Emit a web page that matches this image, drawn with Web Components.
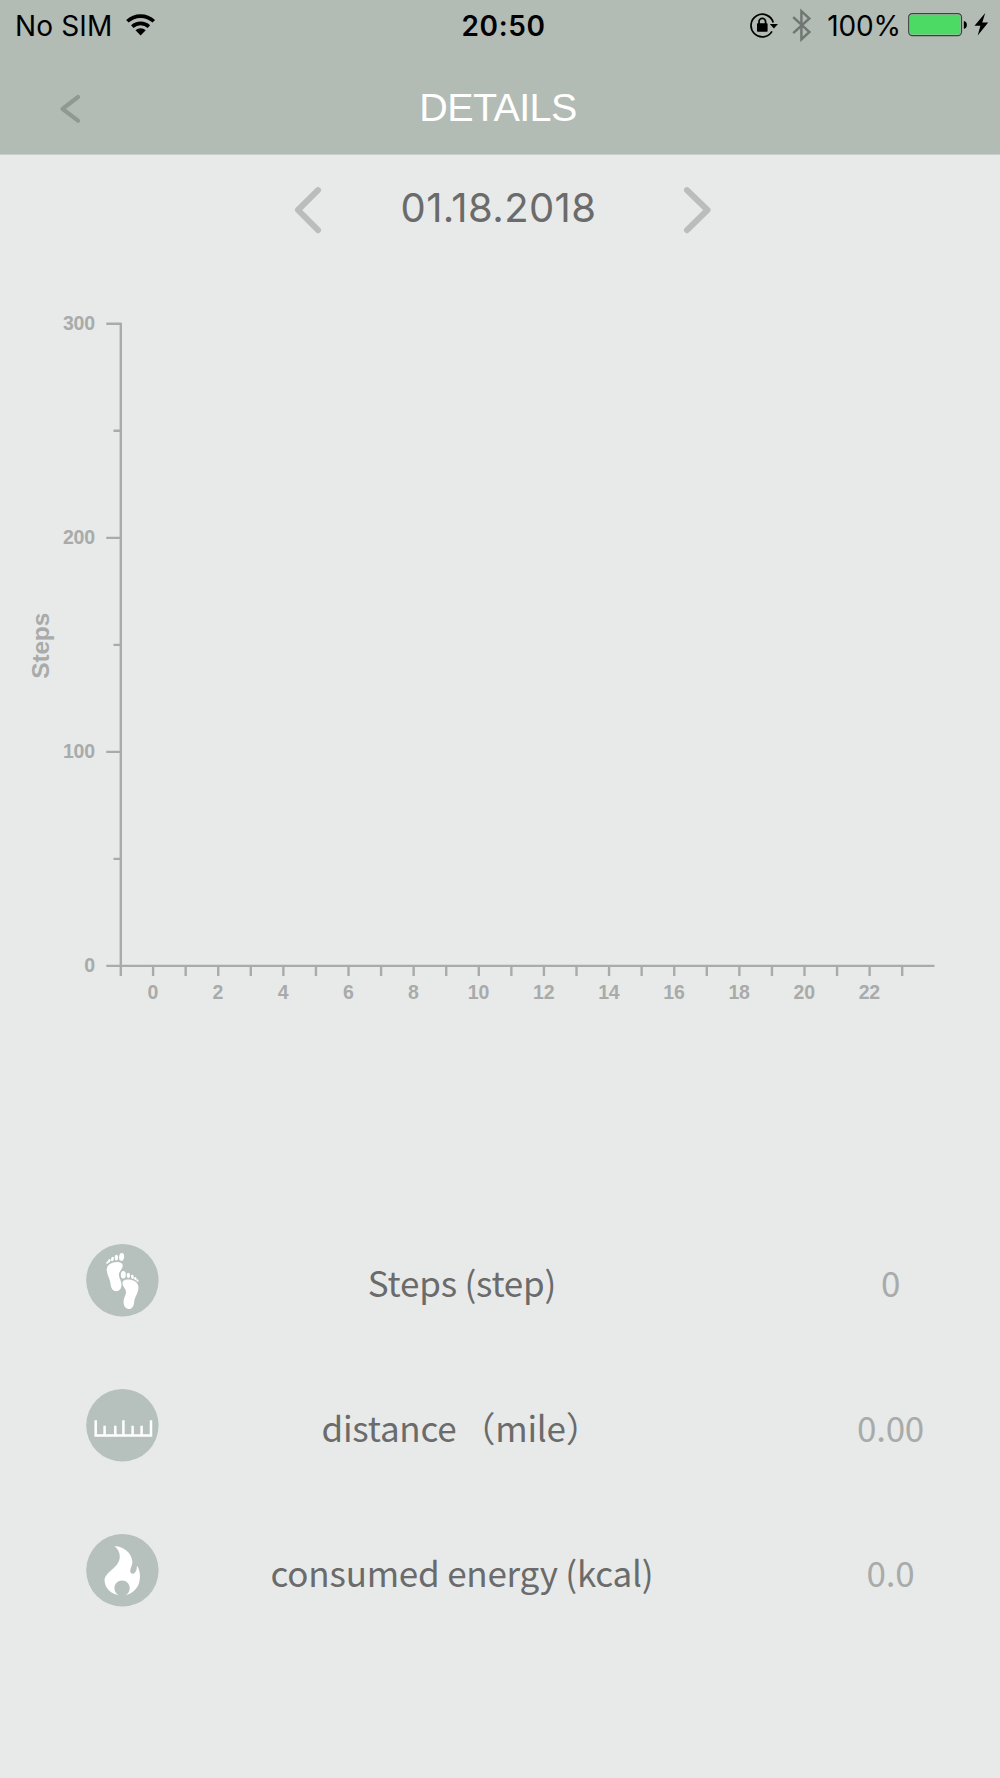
<!DOCTYPE html>
<html lang="en">
<head>
<meta charset="utf-8">
<title>Details</title>
<style>
  html, body { margin: 0; padding: 0; }
  body {
    width: 1000px;
    height: 1778px;
    overflow: hidden;
    background: #e7eae9;
    font-family: "Liberation Sans", Arial, sans-serif;
  }
  .unit { margin: 0 2px 0 4px; }
</style>
</head>
<body>
<details-page>
  <status-bar slot="header" carrier="No SIM" time="20:50" battery="100%"></status-bar>
  <nav-bar slot="header">DETAILS</nav-bar>
  <date-picker>01.18.2018</date-picker>
  <step-chart label="Steps" max="300" hours="24"></step-chart>
  <stat-list>
    <stat-row icon="feet" value="0">Steps (step)</stat-row>
    <stat-row icon="ruler" value="0.00">distance<span class="unit">（mile）</span></stat-row>
    <stat-row icon="flame" value="0.0">consumed energy (kcal)</stat-row>
  </stat-list>
</details-page>

<script>
class DetailsPage extends HTMLElement {
  constructor() {
    super();
    this.attachShadow({ mode: 'open' }).innerHTML = `
      <style>
        :host { display: flex; flex-direction: column; width: 1000px; height: 1778px; }
        header { height: 154px; background: #b2bbb4; border-bottom: 1px solid #c9cfcb; box-sizing: content-box; }
        main { display: flex; flex-direction: column; flex: 1; }
      </style>
      <header><slot name="header"></slot></header>
      <main><slot></slot></main>
    `;
  }
}

class StatusBar extends HTMLElement {
  constructor() {
    super();
    this.attachShadow({ mode: 'open' });
  }

  connectedCallback() {
    this.shadowRoot.innerHTML = `
      <style>
        :host {
          display: grid;
          grid-template-columns: 1fr auto 1fr;
          align-items: center;
          height: 50px;
          padding: 0 11px 0 14px;
          box-sizing: border-box;
          font: 400 28px/48px Inter, sans-serif;
          color: #000;
        }
        .left, .right { display: flex; align-items: center; height: 50px; }
        .left { gap: 13px; padding: 1px 0 0 1px; box-sizing: border-box; letter-spacing: 0.15px; }
        .left svg { margin-top: -2px; }
        .right { justify-content: flex-end; }
        .time { font-weight: 600; letter-spacing: 0.6px; padding: 1px 0 0 4px; }
        .pct { letter-spacing: -0.1px; margin: 1px 6px 0 14px; }
        svg { display: block; flex: none; }
      </style>
      <div class="left">
        <span>${this.getAttribute('carrier')}</span>
        <svg width="32" height="24" viewBox="125 12 32 24">
          <path d="M127.4 20.3a19.4 19.4 0 0 1 26.4 0" fill="none" stroke="#000" stroke-width="3.6"/>
          <path d="M132.3 25.6a12.3 12.3 0 0 1 16.6 0" fill="none" stroke="#000" stroke-width="3.6"/>
          <path d="M135.5 29.3a7.6 7.6 0 0 1 10.2 0l-5.1 5.2z"/>
        </svg>
      </div>
      <span class="time">${this.getAttribute('time')}</span>
      <div class="right">
        <svg width="30" height="30" viewBox="749 9 30 30">
          <path d="M773.2 21.5A11.3 11.3 0 1 0 772 30.4" fill="none" stroke="#000" stroke-width="1.7"/>
          <path d="M769.8 22.9h8.2l-4.1 4.5z"/>
          <rect x="757" y="22.3" width="10.6" height="8.5" rx="0.8"/>
          <path d="M759 23v-2.3a3.3 3.3 0 0 1 6.6 0v2.3" fill="none" stroke="#000" stroke-width="1.7"/>
        </svg>
        <svg width="22" height="34" viewBox="791 7 22 34" style="margin-left:12px">
          <path d="M793.2 16.2l16.2 14.8-8 7.4V10.2l8 7.3-16.2 14.7" fill="none" stroke="#707672" stroke-width="2.4"/>
        </svg>
        <span class="pct">${this.getAttribute('battery')}</span>
        <svg width="82" height="26" viewBox="907 12 82 26">
          <rect x="908.7" y="13.7" width="52.8" height="22" rx="3.6" fill="#b2bbb4" stroke="#3c423f" stroke-width="1.2"/>
          <rect x="909.8" y="14.8" width="50.6" height="19.8" rx="2.4" fill="#4cd964"/>
          <path d="M963.8 21c2 .3 3.1 1.9 3.1 3.9s-1.1 3.6-3.1 3.9z"/>
          <path d="M985.2 13l-10.7 12.8h5.9l-2.7 9.8 10.5-13.2h-5.9z"/>
        </svg>
      </div>
    `;
  }
}

class NavBar extends HTMLElement {
  constructor() {
    super();
    this.attachShadow({ mode: 'open' }).innerHTML = `
      <style>
        :host {
          display: grid;
          grid-template-columns: 100px 1fr 100px;
          align-items: center;
          height: 104px;
          color: #fff;
          font-size: 39.5px;
        }
        svg { display: block; margin: 13px 0 0 58px; }
        h1 { margin: 10px 4px 0 0; font: inherit; line-height: 94px; text-align: center; letter-spacing: -0.6px; }
      </style>
      <svg width="26" height="34" viewBox="58 92 26 34">
        <path d="M78 97L62.5 108.8 78 120.7" fill="none" stroke="#8f9994" stroke-width="4.2" stroke-linecap="round" stroke-linejoin="round"/>
      </svg>
      <h1><slot></slot></h1>
    `;
  }
}

class DatePicker extends HTMLElement {
  constructor() {
    super();
    this.attachShadow({ mode: 'open' }).innerHTML = `
      <style>
        :host {
          display: flex;
          align-items: center;
          justify-content: space-between;
          height: 110px;
          padding: 0 286px 0 291px;
          font: 400 40px/106px Inter, sans-serif;
          color: #6b6b6b;
        }
        svg { display: block; }
        span { letter-spacing: 0.4px; height: 106px; margin: 0 8px 4px 0; }
        path { fill: none; stroke: #bbbcbc; stroke-width: 6; stroke-linecap: round; stroke-linejoin: round; }
      </style>
      <svg width="32" height="52" viewBox="0 0 32 52"><path d="M27 6.2L7 26l20 20.2"/></svg>
      <span><slot></slot></span>
      <svg width="32" height="52" viewBox="0 0 32 52"><path d="M5 6.2L25.5 26 5 46.2"/></svg>
    `;
  }
}

class StepChart extends HTMLElement {
  constructor() {
    super();
    this.attachShadow({ mode: 'open' });
  }

  connectedCallback() {
    const max = Number(this.getAttribute('max'));
    const hours = Number(this.getAttribute('hours'));
    const left = 120.8, right = 934.5, top = 58.8, bottom = 700.9;
    let ticks = '';
    let labels = '';

    // long tick with a label every 100 steps, short one in between
    for (let v = 0; v <= max; v += 50) {
      const y = bottom - (bottom - top) * v / max;
      const major = v % 100 === 0;
      ticks += `M${major ? 106.3 : 113.5} ${y}H${left}`;
      if (major) labels += `<text x="94.9" y="${y + 6}" text-anchor="end">${v}</text>`;
    }

    ticks += `M${left} ${bottom}v10`;
    for (let h = 0; h < hours; h++) {
      const x = 153.1 + h * 32.57;
      ticks += `M${x} ${bottom}v10`;
      if (h % 2 === 0) labels += `<text x="${x - 0.3}" y="733.6" text-anchor="middle">${h}</text>`;
    }

    this.shadowRoot.innerHTML = `
      <style>
        :host { display: block; height: 760px; }
        svg { display: block; }
        path { fill: none; stroke: #a9abaa; stroke-width: 2.4; }
        text { font: bold 19.5px "Liberation Sans", Arial, sans-serif; letter-spacing: -0.2px; fill: #a9abaa; }
        .name { font-size: 24.5px; }
      </style>
      <svg width="1000" height="760" viewBox="0 0 1000 760">
        <path d="M${left} ${top - 1}V${bottom}H${right}${ticks}"/>
        ${labels}
        <text class="name" transform="translate(48.7 380.8) rotate(-90)" text-anchor="middle">${this.getAttribute('label')}</text>
      </svg>
    `;
  }
}

class StatList extends HTMLElement {
  constructor() {
    super();
    this.attachShadow({ mode: 'open' }).innerHTML = `
      <style>
        :host { display: flex; flex-direction: column; margin-top: 183px; }
      </style>
      <slot></slot>
    `;
  }
}

const STAT_ICONS = {
  feet: `
    <g fill="#fff">
      <path d="M20.8 24c1-4 5.5-6 9.7-6.2 4.3-.2 6.6 1.6 6 4.5-.6 3-3.5 4.8-3.7 8-.2 3.500 2.700 6.300 2.600 10.500-.1 3.800-2.300 6.200-5.200 6.200-4.200 0-5.400-3.700-5.900-8.200-.5-5-4.600-9.500-3.500-14.800z"/>
      <path d="M52.3 42.5c-.5-4.5-5-6.8-9.2-7.2-4-.4-6.8 1-6.7 3.900.1 2.700 2.800 4.600 3.400 7.500.6 3.600-2.100 6.200-2.300 10.200-.2 4.500 1.700 7.900 5 8 3.700.1 5.300-3 5.600-7.300.4-5.200 4.800-9.600 4.200-15.100z"/>
      <ellipse cx="35.5" cy="12.7" rx="2.5" ry="3.9" transform="rotate(6 35.5 12.7)"/>
      <ellipse cx="30.3" cy="13.5" rx="1.7" ry="2.9"/>
      <ellipse cx="26.3" cy="14.8" rx="1.4" ry="2.3" transform="rotate(14 26.3 14.8)"/>
      <ellipse cx="23.2" cy="16.5" rx="1.2" ry="1.8" transform="rotate(30 23.2 16.5)"/>
      <ellipse cx="21.3" cy="18.3" rx="1" ry="1.4" transform="rotate(45 21.3 18.3)"/>
      <ellipse cx="37.2" cy="30.5" rx="2.5" ry="3.8"/>
      <ellipse cx="42.3" cy="31.2" rx="1.7" ry="2.7" transform="rotate(-5 42.3 31.2)"/>
      <ellipse cx="46.3" cy="32.6" rx="1.4" ry="2.2" transform="rotate(-15 46.3 32.6)"/>
      <ellipse cx="49.3" cy="34.4" rx="1.2" ry="1.7" transform="rotate(-30 49.3 34.4)"/>
      <ellipse cx="51.3" cy="36.3" rx="1" ry="1.3" transform="rotate(-45 51.3 36.3)"/>
    </g>`,
  ruler: `
    <path d="M9.6 31v15.3h55.3V31M18.5 45v-8.5M29.2 45v-8.5M37.3 45V31M46.5 45v-8.5M55.5 45v-8.5"
      fill="none" stroke="#fff" stroke-width="2.5"/>`,
  flame: `
    <path d="M28.3 12c8.3-.5 17.7 6.6 18 15.5.1 3.6-2.3 6.8-2.2 9.300.1 2.500 1.900 3.300 3.600 2.400 2.200-1.100 3-3.700 3.200-7.700 3.300 4.500 3.700 11.700 2 17.400-1.800 5.900-6.700 10.600-13.600 12.100 3-1.400 4.300-3.700 4.300-7.100 0-4.400-3.300-7.700-7.600-7.700s-7.700 3.300-7.700 7.700c0 3.300 1.500 5.800 4.500 7.100-7.600-1.300-13.800-7-14.300-14.300C18 37.500 33.300 33.800 33.700 22.700c.1-4.500-2-8.300-5.400-10.700z" fill="#fff"/>`
};

class StatRow extends HTMLElement {
  constructor() {
    super();
    this.attachShadow({ mode: 'open' });
  }

  connectedCallback() {
    this.shadowRoot.innerHTML = `
      <style>
        :host {
          display: grid;
          grid-template-columns: 160px 604px 1fr;
          align-items: center;
          height: 145px;
          box-sizing: border-box;
          font: 400 35px/60px "Noto Sans CJK SC", "Noto Sans", sans-serif;
          letter-spacing: -0.22px;
          color: #6b6b6b;
          text-align: center;
        }
        svg { display: block; margin: -2px 0 0 85px; }
        .name, .value { padding-top: 2px; }
        .name { white-space: nowrap; }
        .value { color: #a9abaa; margin-right: -17px; }
      </style>
      <svg width="74" height="74" viewBox="-0.4 -0.3 74 74">
        <circle cx="37" cy="37" r="36.2" fill="#b6c0bc"/>
        <g transform="translate(0.7 0.9)">${STAT_ICONS[this.getAttribute('icon')]}</g>
      </svg>
      <span class="name"><slot></slot></span>
      <span class="value">${this.getAttribute('value')}</span>
    `;
  }
}

customElements.define('details-page', DetailsPage);
customElements.define('status-bar', StatusBar);
customElements.define('nav-bar', NavBar);
customElements.define('date-picker', DatePicker);
customElements.define('step-chart', StepChart);
customElements.define('stat-list', StatList);
customElements.define('stat-row', StatRow);
</script>
</body>
</html>
